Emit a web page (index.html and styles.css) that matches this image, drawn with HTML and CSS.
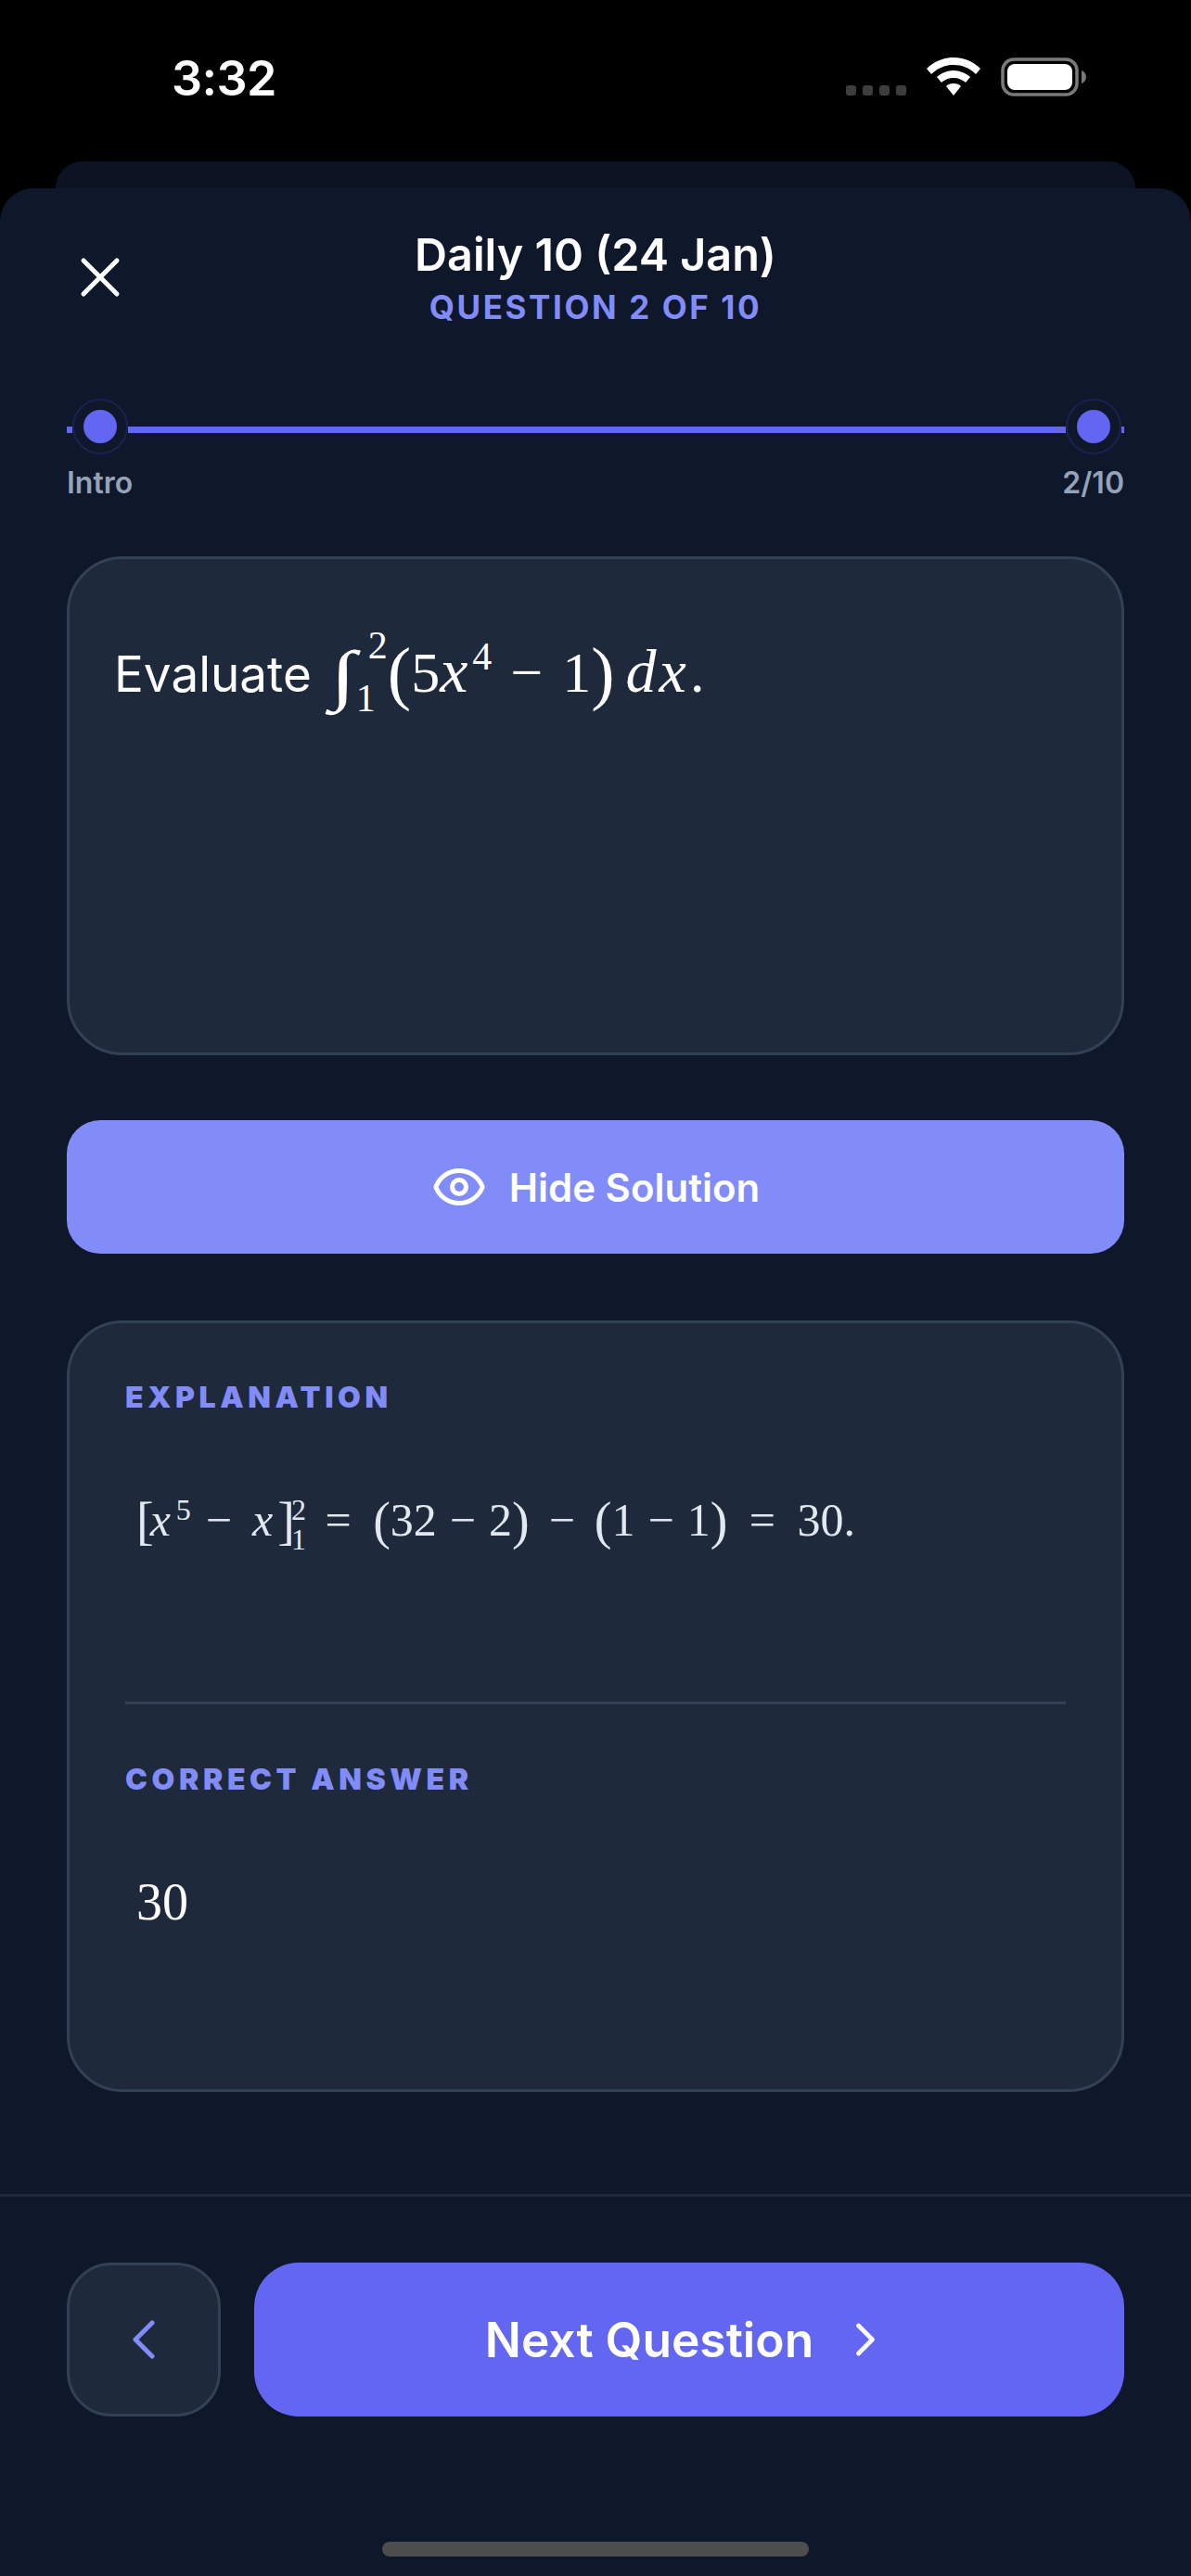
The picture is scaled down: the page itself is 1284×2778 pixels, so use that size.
FILE: index.html
```html
<!DOCTYPE html>
<html lang="en">
<head>
<meta charset="utf-8">
<title>Daily 10</title>
<link rel="stylesheet" href="styles.css">
</head>
<body>
<div class="status">
  <span class="time">3:32</span>
  <div class="status-icons">
    <div class="signal"><i></i><i></i><i></i><i></i></div>
    <svg class="wifi" width="58" height="42" viewBox="0 0 58 42"><path fill="#fff" d="M29 0C18 0 8 4 0 12l5 6C12 11 20 8 29 8s17 3 24 10l5-6C50 4 40 0 29 0z"/><path fill="#fff" d="M29 14c-7 0-13 3-18 7l5 6c3-3 8-5 13-5s10 2 13 5l5-6c-5-4-11-7-18-7z"/><path fill="#fff" d="M29 28c-4 0-6 1-8 3l8 10 8-10c-2-2-4-3-8-3z"/></svg>
    <svg class="battery" width="93" height="42" viewBox="0 0 93 42"><rect x="2" y="2" width="80" height="38" rx="12" fill="none" stroke="#7a7a7a" stroke-width="3.5"/><rect x="7" y="7" width="70" height="28" rx="8" fill="#fff"/><path fill="#7a7a7a" d="M87 14c3 1 5 4 5 7s-2 6-5 7z"/></svg>
  </div>
</div>
<div class="back-card"></div>
<main class="sheet">
  <header class="header">
    <button class="close" aria-label="Close">
      <svg width="72" height="72" viewBox="0 0 24 24" fill="none" stroke="#fff" stroke-width="1.67" stroke-linecap="round"><path d="M18 6 6 18M6 6l12 12"/></svg>
    </button>
    <div class="titles">
      <h1 class="title">Daily 10 (24 Jan)</h1>
      <div class="subtitle">QUESTION 2 OF 10</div>
    </div>
  </header>

  <section class="progress">
    <div class="track">
      <span class="seg seg-start"></span>
      <span class="ring"><span class="dot"></span></span>
      <span class="line"></span>
      <span class="ring"><span class="dot"></span></span>
      <span class="seg seg-end"></span>
    </div>
    <div class="track-labels"><span>Intro</span><span>2/10</span></div>
  </section>

  <section class="card question">
    <p class="q-line">
      <span class="q-text">Evaluate</span>
      <span class="math q-math"><span class="int">∫</span><span class="limits"><span class="lim-up">2</span><span class="lim-down">1</span></span><span class="paren">(</span>5<em class="qx">x</em><sup class="pow">4</sup><span class="op">−</span>1<span class="paren">)</span><em class="dx">dx</em><span class="period">.</span></span>
    </p>
  </section>

  <button class="reveal">
    <svg width="60" height="60" viewBox="0 0 24 24" fill="none" stroke="#fff" stroke-width="2" stroke-linecap="round" stroke-linejoin="round"><path d="M2.06 12.35a1 1 0 0 1 0-.7 10.75 10.75 0 0 1 19.88 0 1 1 0 0 1 0 .7 10.75 10.75 0 0 1-19.88 0"/><circle cx="12" cy="12" r="3"/></svg>
    <span>Hide Solution</span>
  </button>

  <section class="card solution">
    <h2 class="sec-label">EXPLANATION</h2>
    <div class="math exp-math"><span class="br">[</span><em class="x1">x</em><sup class="pow5">5</sup><span class="op-a">−</span><em class="x2">x</em><span class="br br-close">]</span><span class="limits2"><span>2</span><span>1</span></span><span class="op-eq">=</span><span class="br">(</span>32<span class="op-in">−</span>2<span class="br">)</span><span class="op-out">−</span><span class="br">(</span>1<span class="op-in">−</span>1<span class="br">)</span><span class="op-eq">=</span>30.</div>
    <hr class="divider">
    <h2 class="sec-label">CORRECT ANSWER</h2>
    <div class="math answer">30</div>
  </section>

  <footer class="footer">
    <button class="prev" aria-label="Previous">
      <svg width="72" height="72" viewBox="0 0 24 24" fill="none" stroke="#818cf8" stroke-width="1.67" stroke-linecap="round" stroke-linejoin="round"><path d="m15 18-6-6 6-6"/></svg>
    </button>
    <button class="next">
      <span>Next Question</span>
      <svg width="60" height="60" viewBox="0 0 24 24" fill="none" stroke="#fff" stroke-width="1.9" stroke-linecap="round" stroke-linejoin="round"><path d="m9 18 6-6-6-6"/></svg>
    </button>
  </footer>
  <div class="home"></div>
</main>
</body>
</html>
```
FILE: styles.css
```css
* { box-sizing: border-box; }
html, body { margin: 0; padding: 0; }
body {
  width: 1284px;
  height: 2778px;
  overflow: hidden;
  background: #000;
  color: #fff;
  font-family: Inter, "Liberation Sans", sans-serif;
}
button { font-family: inherit; color: inherit; border: 0; padding: 0; background: none; }

.status {
  height: 174px;
  padding: 62px 112px 0 185px;
  display: flex;
  justify-content: space-between;
  align-items: flex-start;
}
.time { font-size: 52px; font-weight: 600; line-height: 46px; letter-spacing: -0.6px; }
.status-icons { display: flex; align-items: flex-end; height: 42px; }
.signal { display: flex; gap: 7px; margin-right: 22px; padding-bottom: 1px; }
.signal i { width: 11px; height: 11px; border-radius: 3px; background: #3d3d3d; display: block; }
.wifi { margin-right: 22px; }

.back-card {
  height: 29px;
  margin: 0 60px;
  background: #0c1424;
  border-radius: 30px 30px 0 0;
}
.sheet {
  height: 2575px;
  background: #0f172a;
  border-radius: 36px 36px 0 0;
  padding: 44px 0 0;
  display: flex;
  flex-direction: column;
}

.header {
  padding: 0 72px;
  display: grid;
  grid-template-columns: 72px 1fr 72px;
  align-items: center;
}
.close { width: 72px; height: 72px; display: flex; }
.titles { text-align: center; }
.title { margin: 0; font-size: 48.5px; line-height: 56px; font-weight: 600; }
.subtitle { margin-top: 8px; font-size: 35px; line-height: 40px; font-weight: 700; letter-spacing: 2.6px; color: #818cf8; }

.progress { margin: 79px 72px 0; }
.track { display: flex; align-items: flex-start; height: 60px; }
.seg, .line { height: 7px; margin-top: 30px; background: #6366f1; display: block; }
.seg-start { width: 6px; }
.seg-end { width: 3px; }
.line { flex: 1; }
.ring {
  width: 60px;
  height: 60px;
  border: 2px solid #1c2150;
  border-radius: 50%;
  display: flex;
  align-items: center;
  justify-content: center;
}
.dot { width: 36px; height: 36px; border-radius: 50%; background: #6366f1; display: block; }
.track-labels {
  display: flex;
  justify-content: space-between;
  margin-top: 14px;
  font-size: 32px;
  line-height: 34px;
  font-weight: 600;
  color: #94a3b8;
}

.card {
  margin: 0 72px;
  background: #1e293b;
  border: 3px solid #334155;
  border-radius: 60px;
}
.question { margin-top: 62px; height: 538px; flex: none; padding: 65px 48px 0; }
.q-line { margin: 0; display: flex; align-items: baseline; line-height: 70px; }
.q-text { font-size: 53px; margin-right: 20px; }

.math { font-family: "Liberation Serif", "DejaVu Serif", serif; white-space: nowrap; }
.math em { font-style: italic; }
.q-math { font-size: 62px; line-height: 70px; }
.int { display: inline-block; width: 28px; font-size: 72px; line-height: 70px; transform: scaleX(1.4); transform-origin: left; vertical-align: -6px; }
.limits { display: inline-flex; flex-direction: column; width: 34px; font-size: 42px; line-height: 57px; vertical-align: 36px; }
.lim-up { margin-left: 13px; }
.lim-down { margin-left: 0; }
.paren { font-size: 76px; line-height: 70px; vertical-align: -5px; }
.qx { font-size: 68px; line-height: 0; }
.pow { font-size: 42px; line-height: 0; vertical-align: 24px; margin-left: 5px; }
.op { margin: 0 21px 0 20px; }
.dx { margin-left: 12px; letter-spacing: 3px; font-size: 66px; line-height: 0; }
.period { margin-left: 1px; }

.reveal {
  margin: 70px 72px 0;
  height: 144px;
  flex: none;
  background: #818cf8;
  border-radius: 36px;
  display: flex;
  align-items: center;
  justify-content: center;
  gap: 24px;
  font-size: 42px;
  font-weight: 600;
}

.solution { margin-top: 72px; height: 832px; flex: none; padding: 60px 60px 0; }
.sec-label { margin: 0; font-size: 32px; line-height: 40px; font-weight: 900; letter-spacing: 4.6px; color: #818cf8; }
.exp-math { margin-top: 72px; padding-left: 12px; font-size: 50px; line-height: 80px; color: #e2e8f0; }
.br { font-size: 56px; line-height: 50px; vertical-align: -3px; }
.x1 { margin-left: -4px; }
.pow5 { font-size: 32px; line-height: 0; vertical-align: 17px; margin-left: 6px; }
.op-a { margin: 0 22px 0 16px; }
.br-close { margin-left: 5px; }
.limits2 { display: inline-flex; flex-direction: column; margin: 0 -3px 0 -4px; font-size: 32px; line-height: 32px; vertical-align: 17px; }
.op-in { margin: 0 14px; }
.op-out { margin: 0 21px; }
.op-eq { margin: 0 23.5px; }
.divider { margin: 156px 0 0; height: 3px; border: 0; background: #334155; }
.solution .divider + .sec-label { margin-top: 61px; }
.answer { margin-top: 72px; padding-left: 12px; font-size: 56px; line-height: 80px; }

.footer {
  margin-top: auto;
  border-top: 3px solid #1e293b;
  padding: 71px 72px 0;
  display: flex;
  gap: 36px;
}
.prev {
  width: 166px;
  height: 166px;
  flex: none;
  background: #1e293b;
  border: 3px solid #334155;
  border-radius: 48px;
  display: flex;
  align-items: center;
  justify-content: center;
}
.next {
  flex: 1;
  height: 166px;
  background: #6366f1;
  border-radius: 48px;
  display: flex;
  align-items: center;
  justify-content: center;
  gap: 26px;
  font-size: 51.5px;
  font-weight: 600;
}
.home {
  width: 460px;
  height: 16px;
  margin: 135px auto 21px;
  background: #4d4d4d;
  border-radius: 8px;
  flex: none;
}
```
